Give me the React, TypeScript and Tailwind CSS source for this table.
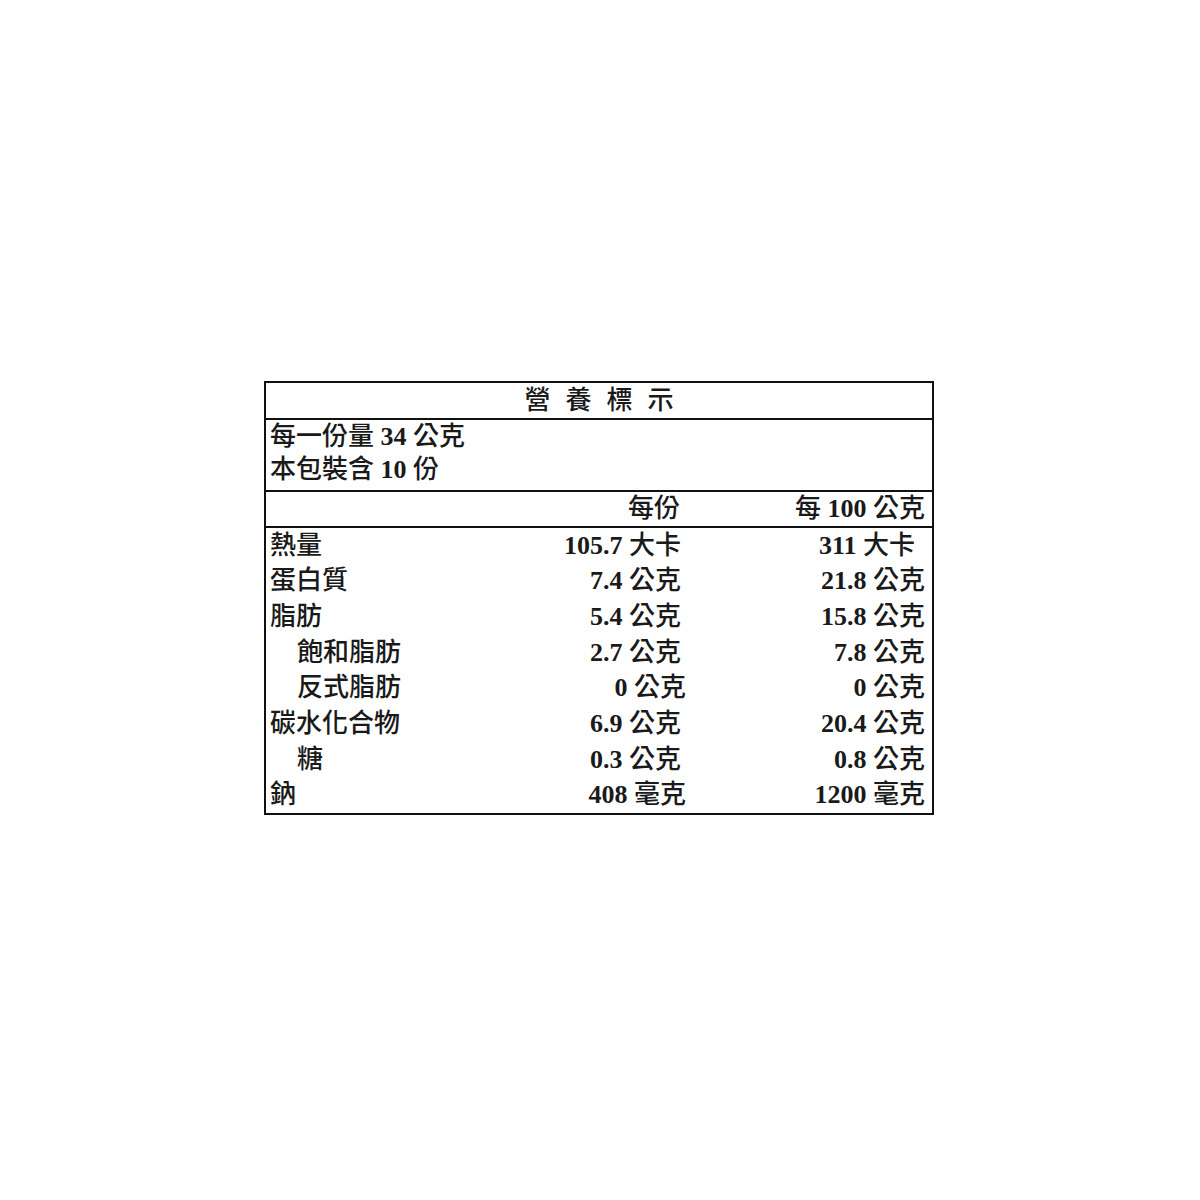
import React from "react";

type Row = {
  label: string;
  indent?: boolean;
  a: string;
  aUnit: string;
  b: string;
  bUnit: string;
  aShift?: boolean;
  bShift?: boolean;
};

const rows: Row[] = [
  { label: "熱量", a: "105.7", aUnit: "大卡", b: "311", bUnit: "大卡", bShift: true },
  { label: "蛋白質", a: "7.4", aUnit: "公克", b: "21.8", bUnit: "公克" },
  { label: "脂肪", a: "5.4", aUnit: "公克", b: "15.8", bUnit: "公克" },
  { label: "飽和脂肪", indent: true, a: "2.7", aUnit: "公克", b: "7.8", bUnit: "公克" },
  { label: "反式脂肪", indent: true, a: "0", aUnit: "公克", b: "0", bUnit: "公克", aShift: true },
  { label: "碳水化合物", a: "6.9", aUnit: "公克", b: "20.4", bUnit: "公克" },
  { label: "糖", indent: true, a: "0.3", aUnit: "公克", b: "0.8", bUnit: "公克" },
  { label: "鈉", a: "408", aUnit: "毫克", b: "1200", bUnit: "毫克", aShift: true },
];

const font = {
  fontFamily:
    '"Liberation Serif", "Noto Sans CJK TC", "Noto Sans CJK SC", serif',
};

function N({ children }: { children: React.ReactNode }) {
  return <span className="font-bold">{children}</span>;
}

export default function App() {
  return (
    <div
      className="w-[1200px] h-[1200px] bg-white text-[#1a1a1a] font-medium text-[26px]"
      style={font}
    >
      <div className="pt-[381px] pl-[264px]">
        <div className="w-[670px] border-2 border-[#111111] flex flex-col">
          {/* Title */}
          <div className="h-[35px] flex items-center justify-center gap-[15px] leading-none">
            <span>營</span>
            <span>養</span>
            <span>標</span>
            <span>示</span>
          </div>
          <div className="h-[2px] bg-[#111111]" />
          {/* Serving */}
          <div className="h-[70px] pl-[4px] flex flex-col leading-[33px]">
            <div>
              每一份量 <N>34</N> 公克
            </div>
            <div>
              本包裝含 <N>10</N> 份
            </div>
          </div>
          <div className="h-[2px] bg-[#111111]" />
          {/* Header */}
          <div className="h-[34px] flex items-center leading-none">
            <div className="flex-1" />
            <div className="w-[205px] pr-[6px] text-right">每份</div>
            <div className="w-[246px] pr-[7px] text-right">
              每 <N>100</N> 公克
            </div>
          </div>
          <div className="h-[2px] bg-[#111111]" />
          {/* Data */}
          <div className="h-[285px] flex flex-col">
            {rows.map((r) => (
              <div key={r.label} className="flex-1 flex items-center leading-none">
                <div className={"flex-1 " + (r.indent ? "pl-[31px]" : "pl-[4px]")}>
                  {r.label}
                </div>
                <div
                  className={
                    "w-[205px] text-right whitespace-nowrap " +
                    (r.aShift ? "pr-0" : "pr-[5px]")
                  }
                >
                  <N>{r.a}</N> {r.aUnit}
                </div>
                <div
                  className={
                    "w-[246px] text-right whitespace-nowrap " +
                    (r.bShift ? "pr-[17px]" : "pr-[7px]")
                  }
                >
                  <N>{r.b}</N> {r.bUnit}
                </div>
              </div>
            ))}
          </div>
        </div>
      </div>
    </div>
  );
}
